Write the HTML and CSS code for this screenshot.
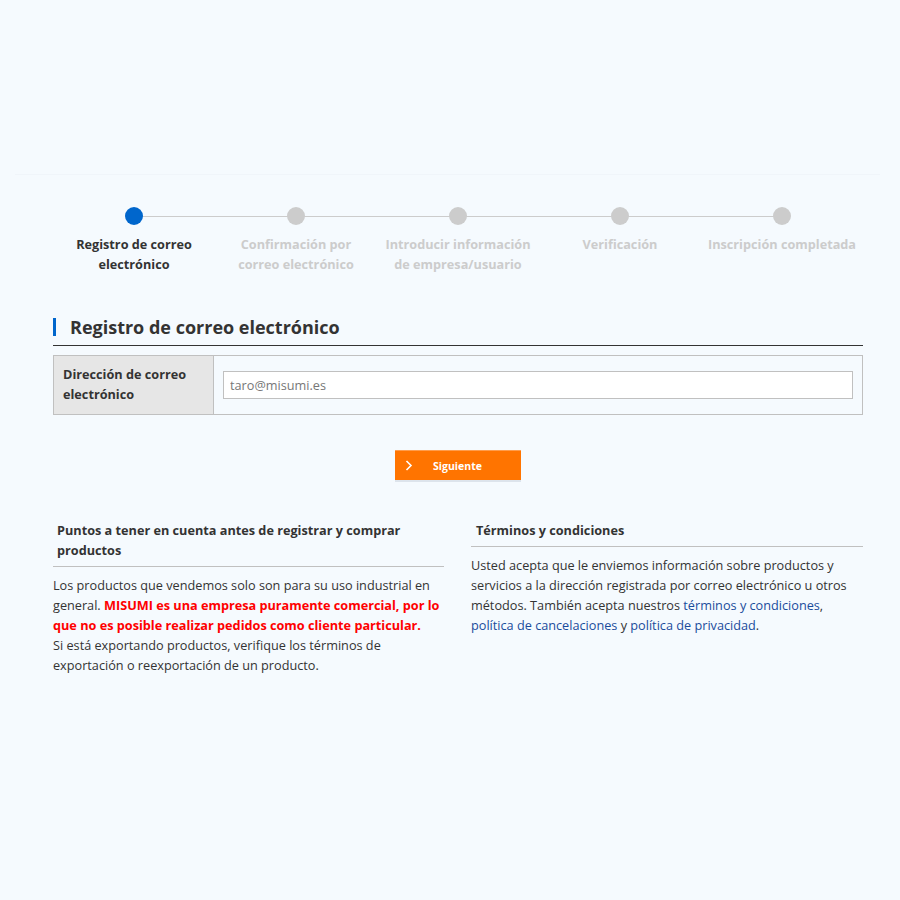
FILE: index.html
```html
<!DOCTYPE html>
<html lang="es">
<head>
<meta charset="utf-8">
<title>Registro de correo electrónico</title>
<link rel="stylesheet" href="styles.css">
</head>
<body>
<div class="topline"></div>
<main class="page">
  <ol class="steps">
    <li class="step active"><span class="dot"></span><span class="label">Registro de correo<br>electrónico</span></li>
    <li class="step"><span class="dot"></span><span class="label">Confirmación por<br>correo electrónico</span></li>
    <li class="step"><span class="dot"></span><span class="label">Introducir información<br>de empresa/usuario</span></li>
    <li class="step"><span class="dot"></span><span class="label">Verificación</span></li>
    <li class="step last"><span class="dot"></span><span class="label">Inscripción completada</span></li>
  </ol>

  <h1 class="title">Registro de correo electrónico</h1>

  <div class="formtable">
    <div class="fieldlabel">Dirección de correo<br>electrónico</div>
    <div class="fieldvalue"><input class="email" type="text" placeholder="taro@misumi.es"></div>
  </div>

  <div class="actions">
    <button class="next" type="button">
      <svg class="chev" width="8" height="11" viewBox="0 0 8 11"><path d="M1.5 1 L6 5.5 L1.5 10" fill="none" stroke="#fff" stroke-width="1.6"/></svg>
      <span>Siguiente</span>
    </button>
  </div>

  <div class="notes">
    <section class="note">
      <h2 class="note-title">Puntos a tener en cuenta antes de registrar y comprar productos</h2>
      <p class="note-body">Los productos que vendemos solo son para su uso industrial en general. <strong class="warn">MISUMI es una empresa puramente comercial, por lo que no es posible realizar pedidos como cliente particular.</strong><br>Si está exportando productos, verifique los términos de exportación o reexportación de un producto.</p>
    </section>
    <section class="note">
      <h2 class="note-title">Términos y condiciones</h2>
      <p class="note-body">Usted acepta que le enviemos información sobre productos y servicios a la dirección registrada por correo electrónico u otros métodos. También acepta nuestros <a href="#">términos y condiciones</a>, <a href="#">política de cancelaciones</a> y <a href="#">política de privacidad</a>.</p>
    </section>
  </div>
</main>
</body>
</html>
```

FILE: styles.css
```css
html, body {
  margin: 0;
  padding: 0;
  background: #f5fafe;
}
body {
  font-family: "Open Sans", "Noto Sans", sans-serif;
  color: #333;
  font-size: 12.7px;
  line-height: 20px;
}
.topline {
  height: 175px;
  margin: 0 20px 0 15px;
  border-bottom: 1px solid #f0f5fa;
  box-sizing: border-box;
}
.page {
  width: 810px;
  margin: 0 0 0 53px;
  padding-top: 32px;
}
.steps {
  list-style: none;
  margin: 0;
  padding: 0;
  display: grid;
  grid-template-columns: repeat(5, 162px);
}
.step {
  position: relative;
  display: flex;
  flex-direction: column;
  align-items: center;
  text-align: center;
}
.step::after {
  content: "";
  position: absolute;
  top: 9px;
  left: 50%;
  width: 100%;
  height: 1px;
  background: #ccc;
}
.step.last::after { display: none; }
.dot {
  position: relative;
  z-index: 1;
  width: 18px;
  height: 18px;
  border-radius: 50%;
  background: #ccc;
}
.step.active .dot { background: #0066cc; }
.label {
  margin-top: 9px;
  font-size: 12.7px;
  font-weight: 700;
  line-height: 20px;
  color: #ccc;
  white-space: nowrap;
}
.step.active .label { color: #333; }

.title {
  margin: 41px 0 0;
  padding: 0 0 6px 17px;
  font-size: 18px;
  font-weight: 700;
  line-height: 24px;
  color: #333;
  border-bottom: 1px solid #333;
  position: relative;
}
.title::before {
  content: "";
  position: absolute;
  left: 0;
  top: 3px;
  width: 3px;
  height: 18px;
  background: #0066cc;
}
.formtable {
  margin-top: 9px;
  display: flex;
  border: 1px solid #c0c0c0;
}
.fieldlabel {
  width: 160px;
  flex: none;
  background: #e6e6e6;
  border-right: 1px solid #c0c0c0;
  padding: 8px 0 10px 9px;
  box-sizing: border-box;
  font-weight: 700;
  line-height: 20px;
}
.fieldvalue {
  flex: 1;
  padding: 15px 9px 0 9px;
}
.email {
  display: block;
  width: 100%;
  height: 28px;
  box-sizing: border-box;
  border: 1px solid #c0c0c0;
  background: #fff;
  padding: 0 6px;
  font-family: "Open Sans", "Noto Sans", sans-serif;
  font-size: 12.7px;
  color: #333;
  outline: none;
}
.email::placeholder { color: #777; }

.actions {
  display: flex;
  justify-content: center;
  margin-top: 35px;
}
.next {
  width: 126px;
  height: 30px;
  border: 0;
  border-top: 1px solid #ff9d4d;
  background: #ff7400;
  box-shadow: 0 2px 0 #dde4ec;
  color: #fff;
  font-family: "Open Sans", "Noto Sans", sans-serif;
  font-size: 10.5px;
  font-weight: 700;
  display: flex;
  align-items: center;
  padding: 0 0 0 10px;
  cursor: pointer;
}
.chev { flex: none; }
.next span { margin-left: 20px; }

.notes {
  margin-top: 40px;
  display: grid;
  grid-template-columns: 391px 392px;
  column-gap: 27px;
}
.note-title {
  margin: 0;
  padding: 0 0 6px 4px;
  font-size: 12.7px;
  font-weight: 700;
  line-height: 20px;
  border-bottom: 1px solid #c0c0c0;
}
.note:last-child .note-title { padding-left: 5px; }
.note-body {
  margin: 8px 0 0;
  font-size: 12.7px;
  line-height: 20px;
}
.warn { color: #f00; }
.note-body a { color: #1a4c9c; text-decoration: none; }
```
